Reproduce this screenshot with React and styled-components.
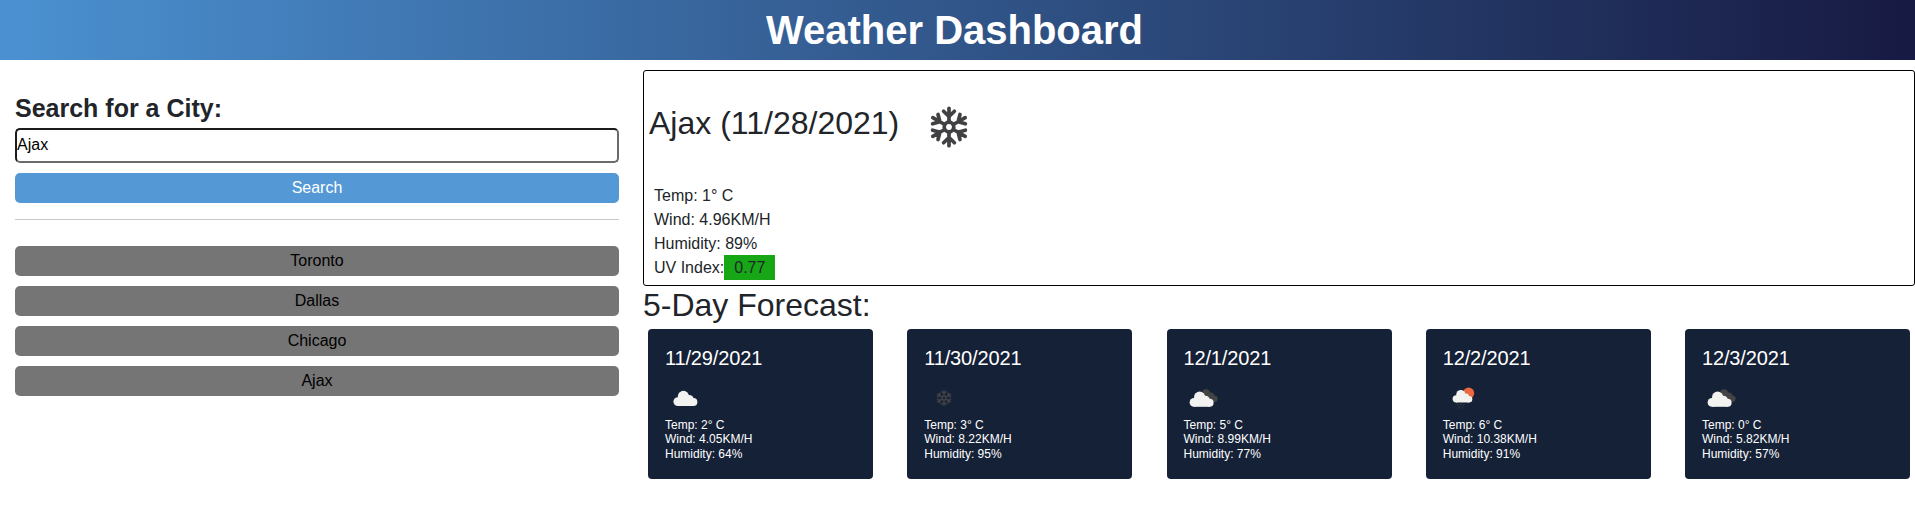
import React, { useState } from "react";
import styled, { createGlobalStyle } from "styled-components";

const GlobalStyle = createGlobalStyle`
  *, *::before, *::after { box-sizing: border-box; }
  body {
    margin: 0;
    background: #fff;
    color: #212529;
    font: 400 16px/24px "Liberation Sans", Arial, sans-serif;
  }
  h1, h2, h3, h4, p, ul { margin: 0; padding: 0; font-weight: 400; }
  ul { list-style: none; }
`;

const Header = styled.header`
  height: 60px;
  padding-right: 6px;
  background: linear-gradient(90deg, #4b91d1, #171a42);
  display: flex;
  align-items: center;
  justify-content: center;
`;

const PageTitle = styled.h1`
  color: #fff;
  font-size: 40px;
  font-weight: 700;
  line-height: 60px;
`;

const Layout = styled.main`
  display: grid;
  grid-template-columns: 643px 1fr;
  padding-top: 10px;
`;

const Sidebar = styled.aside`
  padding: 24px 24px 0 15px;
`;

const SearchLabel = styled.h3`
  font-size: 25px;
  font-weight: 700;
  line-height: 29px;
  margin-bottom: 5px;
`;

const SearchInput = styled.input`
  display: block;
  width: 100%;
  height: 35px;
  margin-bottom: 10px;
  padding: 0 0 1px;
  border: 2px solid;
  border-color: #1c1c1e #6b6b6b #6b6b6b #1c1c1e;
  border-radius: 5px;
  background: #fff;
  color: #000;
  font: inherit;
  outline: none;
`;

const Button = styled.button`
  display: block;
  width: 100%;
  height: 30px;
  margin-bottom: 10px;
  padding: 0;
  border: 0;
  border-radius: 5px;
  font: inherit;
  background: ${(p) => (p.$primary ? "#5499d5" : "#757575")};
  color: ${(p) => (p.$primary ? "#fff" : "#000")};
`;

const Divider = styled.hr`
  height: 1px;
  margin: 16px 0 26px;
  border: 0;
  background: #c8c9ca;
`;

const Content = styled.section`
  min-width: 0;
`;

const CurrentPanel = styled.article`
  height: 216px;
  padding: 5px;
  border: 1px solid #000;
  border-radius: 3px;
`;

const CurrentHeading = styled.div`
  display: flex;
  align-items: center;
  height: 101px;
`;

const CityName = styled.h2`
  font-size: 32px;
  line-height: 38px;
  padding-bottom: 7px;
`;

const CurrentStats = styled.ul`
  padding: 7px 5px 0;
`;

const StatRow = styled.li`
  display: flex;
  height: 24px;
`;

const UvBadge = styled.span`
  height: 25px;
  margin-top: -1px;
  padding: 1px 10px 0;
  background: #16a616;
`;

const ForecastTitle = styled.h2`
  font-size: 32px;
  line-height: 38px;
`;

const ForecastRow = styled.div`
  display: flex;
  justify-content: space-between;
  padding: 5px 5px 0;
`;

const Card = styled.article`
  width: 225px;
  height: 150px;
  padding: 17px 17px 0;
  border-radius: 4px;
  background: #152137;
  color: #fff;
`;

const CardDate = styled.h4`
  font-size: 20px;
  line-height: 24px;
  letter-spacing: -0.15px;
`;

const CardStats = styled.ul`
  font-size: 12px;
  line-height: 14.4px;
`;

const Icon = styled.svg`
  display: block;
  flex: none;
  width: ${(p) => p.$size}px;
  height: ${(p) => p.$size}px;
  margin: ${(p) => p.$margin || 0};
`;

const Cloud = ({ x, y, scale = 1 }) => (
  <g transform={`translate(${x} ${y}) scale(${scale})`} fill="#f2f2f0">
    <circle cx="11" cy="27" r="11" />
    <circle cx="25" cy="14" r="14" />
    <circle cx="40" cy="21" r="10.5" />
    <circle cx="50" cy="28" r="10" />
    <rect x="11" y="20" width="39" height="18" />
  </g>
);

const Snowflake = () => (
  <g stroke="#414143" strokeWidth="3.7" strokeLinecap="round" fill="none">
    {[0, 60, 120, 180, 240, 300].map((angle) => (
      <path
        key={angle}
        transform={`rotate(${angle} 50 50)`}
        d="M50 45V31.3M50 39.5L44.6 34.2M50 39.5L55.4 34.2"
      />
    ))}
    <circle cx="50" cy="50" r="4.8" />
  </g>
);

const DRAWINGS = {
  snow: <Snowflake />,
  cloud: <Cloud x={21} y={32} />,
  broken: (
    <>
      <g fill="#434344">
        <circle cx="55" cy="38" r="10" />
        <circle cx="67" cy="45" r="9" />
        <circle cx="76" cy="52" r="8" />
        <rect x="55" y="44" width="20" height="16" />
      </g>
      <Cloud x={14} y={34} />
    </>
  ),
  rain: (
    <>
      <circle cx="64" cy="38" r="14" fill="#eb6841" />
      <Cloud x={24} y={30} scale={0.82} />
      <path
        d="M37 66l-1 2M45 65l-1 3M53 66l-2 3M41 72l-1 3M49 73l-1 3"
        stroke="#3c3d42"
        strokeWidth="2.5"
        strokeLinecap="round"
      />
    </>
  ),
};

const WeatherIcon = ({ kind, size, margin }) => (
  <Icon viewBox="0 0 100 100" $size={size} $margin={margin} aria-hidden="true">
    {DRAWINGS[kind]}
  </Icon>
);

const cities = ["Toronto", "Dallas", "Chicago", "Ajax"];

const forecast = [
  { date: "11/29/2021", icon: "cloud", temp: 2, wind: "4.05", humidity: 64 },
  { date: "11/30/2021", icon: "snow", temp: 3, wind: "8.22", humidity: 95 },
  { date: "12/1/2021", icon: "broken", temp: 5, wind: "8.99", humidity: 77 },
  { date: "12/2/2021", icon: "rain", temp: 6, wind: "10.38", humidity: 91 },
  { date: "12/3/2021", icon: "broken", temp: 0, wind: "5.82", humidity: 57 },
];

export default function App() {
  const [query, setQuery] = useState("Ajax");
  return (
    <>
      <GlobalStyle />
      <Header>
        <PageTitle>Weather Dashboard</PageTitle>
      </Header>
      <Layout>
        <Sidebar>
          <SearchLabel>Search for a City:</SearchLabel>
          <SearchInput value={query} onChange={(e) => setQuery(e.target.value)} />
          <Button $primary>Search</Button>
          <Divider />
          {cities.map((city) => (
            <Button key={city}>{city}</Button>
          ))}
        </Sidebar>
        <Content>
          <CurrentPanel>
            <CurrentHeading>
              <CityName>Ajax (11/28/2021)</CityName>
              <WeatherIcon kind="snow" size={100} />
            </CurrentHeading>
            <CurrentStats>
              <StatRow>Temp: 1° C</StatRow>
              <StatRow>Wind: 4.96KM/H</StatRow>
              <StatRow>Humidity: 89%</StatRow>
              <StatRow>
                UV Index:<UvBadge>0.77</UvBadge>
              </StatRow>
            </CurrentStats>
          </CurrentPanel>
          <ForecastTitle>5-Day Forecast:</ForecastTitle>
          <ForecastRow>
            {forecast.map((day) => (
              <Card key={day.date}>
                <CardDate>{day.date}</CardDate>
                <WeatherIcon kind={day.icon} size={40} margin="8px 0 0" />
                <CardStats>
                  <li>Temp: {day.temp}° C</li>
                  <li>Wind: {day.wind}KM/H</li>
                  <li>Humidity: {day.humidity}%</li>
                </CardStats>
              </Card>
            ))}
          </ForecastRow>
        </Content>
      </Layout>
    </>
  );
}
